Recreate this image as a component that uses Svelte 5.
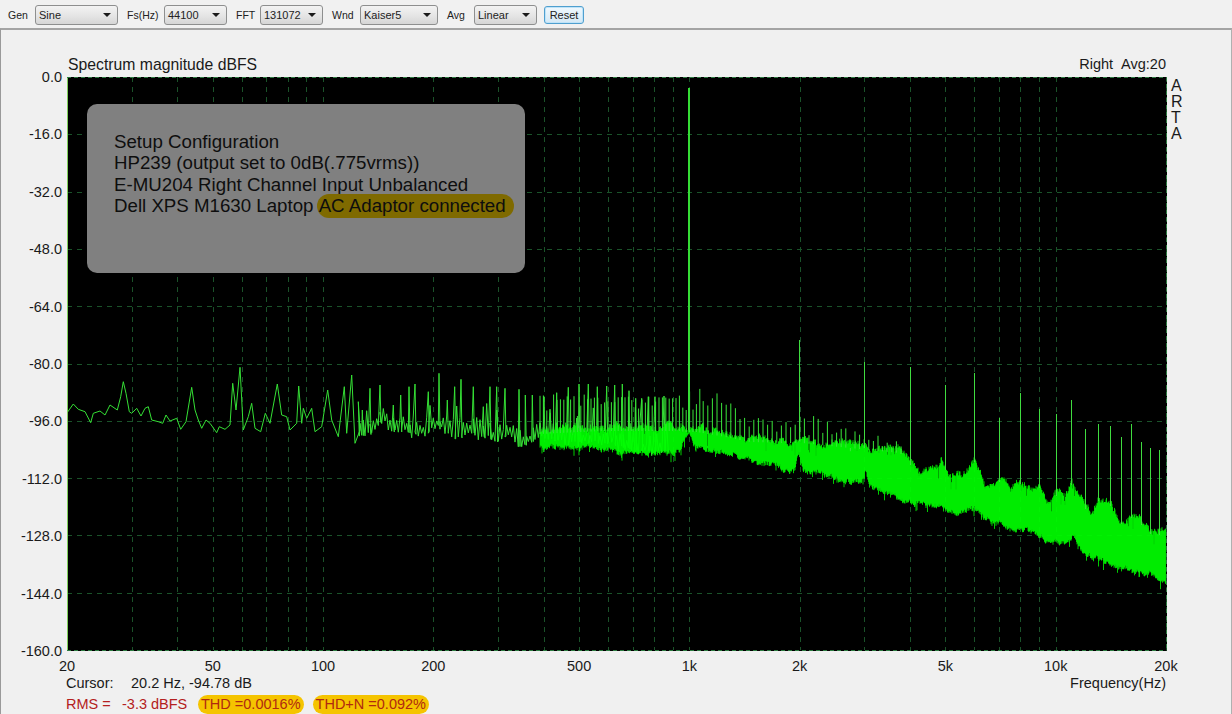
<script>
  const X0 = 67, X1 = 1166, Y0 = 77, Y1 = 650;
  const fx = (f) => X0 + (Math.log10(f / 20) / 3) * (X1 - X0);

  let seed = 20392;
  const rnd = () => {
    seed = (seed + 0x6d2b79f5) | 0;
    let t = Math.imul(seed ^ (seed >>> 15), 1 | seed);
    t = (t + Math.imul(t ^ (t >>> 7), 61 | t)) ^ t;
    return ((t ^ (t >>> 14)) >>> 0) / 4294967296;
  };
  const interp = (table, x, col) => {
    for (let i = 1; i < table.length; i++) {
      if (x <= table[i][0]) {
        const a = table[i - 1], b = table[i];
        return a[col] + ((b[col] - a[col]) * (x - a[0])) / (b[0] - a[0]);
      }
    }
    return table[table.length - 1][col];
  };

  const vLines = [];
  for (const d of [10, 100, 1000, 10000]) {
    for (let m = d === 10 ? 3 : 1; m < 10; m++) vLines.push(fx(m * d));
  }
  const hLines = [];
  for (let i = 1; i < 10; i++) hLines.push(Y0 + (i * (Y1 - Y0)) / 10);

  const yLabels = ['0.0', '-16.0', '-32.0', '-48.0', '-64.0', '-80.0', '-96.0', '-112.0', '-128.0', '-144.0', '-160.0'];
  const xLabels = [
    ['20', 20], ['50', 50], ['100', 100], ['200', 200], ['500', 500],
    ['1k', 1000], ['2k', 2000], ['5k', 5000], ['10k', 10000], ['20k', 20000]
  ].map(([t, f]) => ({ t, left: fx(f) - X0 }));

  // traced low-frequency section (zoomed coordinates: x/3+60, y/3+360)
  const traced = [[20,160],[40,132],[55,148],[75,155],[92,188],[100,160],[120,153],[135,165],[150,135],[172,150],[182,110],[190,65],[198,100],[208,155],[215,160],[230,145],[243,168],[255,145],[265,140],[275,180],[295,185],[308,190],[318,165],[330,183],[350,175],[362,208],[378,185],[395,82],[405,150],[415,180],[425,205],[438,180],[450,190],[470,218],[478,200],[495,208],[510,195],[518,70],[528,150],[540,22],[550,210],[565,170],[575,130],[585,205],[602,215],[616,160],[630,190],[652,72],[665,165],[680,170],[690,210],[710,190],[716,78],[725,190],[730,145],[740,175],[755,145],[765,215],[785,200],[803,90],[815,180],[835,230],[853,80],[860,220],[875,45],[885,250],[900,210]];
  let lowPath = 'M67 ' + (360 + 170 / 3).toFixed(1);
  for (const [zx, zy] of traced) lowPath += 'L' + (zx / 3 + 60).toFixed(1) + ' ' + (zy / 3 + 360).toFixed(1);

  // sparse section: traced spike tops, with smaller spikes between them in a band
  const spikes = [[55,125],[67,150],[90,85],[120,75],[160,135],[182,105],[207,80],[225,72],[265,95],[297,40],[322,120],[344,80],[363,58],[400,80],[430,140],[450,80],[470,80],[495,85],[537,88],[556,105],[577,105],[612,110],[650,98],[685,82],[717,72],[745,72],[772,80],[800,78],[824,75],[847,72],[867,92],[887,115],[905,115],[925,110],[945,110],[972,108]];
  const band = [[0,232],[50,236],[100,228],[125,185],[160,222],[200,222],[250,236],[280,205],[320,222],[350,246],[400,225],[470,252],[500,232],[545,270],[600,240],[700,250],[800,258],[900,280],[990,280]];
  let sparse = 'M360 430';
  let si = 0;
  let up = false;
  for (let zx = 60; zx < 990; zx += 5) {
    while (si < spikes.length && spikes[si][0] <= zx) {
      sparse += 'L' + (spikes[si][0] / 3 + 340).toFixed(1) + ' ' + (spikes[si][1] / 3 + 360).toFixed(1);
      sparse += 'L' + ((spikes[si][0] + 3) / 3 + 340).toFixed(1) + ' ' + (interp(band, zx, 1) / 3 + 360 - 2).toFixed(1);
      si++;
    }
    const low = interp(band, zx, 1);
    up = !up;
    const y = up
      ? low - 26 - rnd() * (rnd() < 0.35 ? 85 : 34)
      : low - rnd() * 16 + (rnd() < 0.12 ? 10 : 0);
    sparse += 'L' + (zx / 3 + 340).toFixed(1) + ' ' + (y / 3 + 360).toFixed(1);
  }

  // dense section: [x, top of band, bottom of band]
  const env = [[540,428,448],[600,425,450],[660,425,455],[680,425,454],[685,426,440],[689,426,431],[693,426,442],[697,426,448],[720,430,452],[750,436,462],[790,437,473],[795,437,470],[799,435,454],[803,437,468],[830,440,479],[860,443,485],[865,442,474],[869,444,487],[900,447,499],[920,470,504],[930,466,507],[942,456,509],[950,476,515],[965,470,512],[975,454,509],[985,484,519],[1000,475,525],[1010,484,529],[1020,478,532],[1030,486,534],[1040,481,539],[1047,501,542],[1055,490,544],[1065,494,545],[1072,476,535],[1085,503,555],[1092,514,560],[1098,495,559],[1110,500,565],[1125,524,570],[1132,510,570],[1150,528,575],[1165,530,584]];
  let dense = '';
  let slowTop = 0, slowLow = 0;
  for (let x = 540; x <= 1165.5; x += 0.5) {
    slowTop = slowTop * 0.9 + (rnd() - 0.5) * 3;
    slowLow = slowLow * 0.9 + (rnd() - 0.5) * 2.6;
    const dark = rnd() < 0.07 ? rnd() * 14 : 0;
    const top = interp(env, x, 1) + slowTop + rnd() * 5 + dark;
    const low = interp(env, x, 2) + slowLow - 3 + rnd() * 4 + (rnd() < 0.06 ? rnd() * 9 : 0);
    dense += 'M' + x.toFixed(1) + ' ' + low.toFixed(1) + 'V' + top.toFixed(1);
  }

  // comb lines standing above the dense band
  const combTop = [[360,392],[530,393],[600,395],[670,397],[700,388],[720,393],[735,407],[750,413],[790,418],[810,413],[840,427],[870,433],[900,442],[905,445]];
  let comb = '';
  for (let x = 540; x < 905; x += x < 700 ? 3.4 : 4.6) {
    const top = interp(combTop, x, 1) + rnd() * rnd() * 26;
    comb += 'M' + x.toFixed(1) + ' ' + (interp(env, x, 1) + 6).toFixed(1) + 'V' + top.toFixed(1);
  }

  const harmonics = [[799,340],[864,362],[910,367],[945,385],[974,373],[999,418],[1020,393],[1039,409],[1056,414],[1071,400],[1085,429],[1098,424],[1110,426],[1121,437],[1131,424],[1141,442],[1150,448],[1159,450]];
  const harm = harmonics.map(([x, y]) => 'M' + (x + 0.5) + ' ' + (interp(env, x, 1) + 6).toFixed(0) + 'V' + y).join('');

  const controls = [
    { label: 'Gen', lw: 27, value: 'Sine', width: 83 },
    { label: 'Fs(Hz)', lw: 37, value: '44100', width: 63 },
    { label: 'FFT', lw: 24, value: '131072', width: 63 },
    { label: 'Wnd', lw: 28, value: 'Kaiser5', width: 78 },
    { label: 'Avg', lw: 27, value: 'Linear', width: 63 }
  ];
</script>

<div class="app">
  <div class="toolbar">
    {#each controls as c}
      <span class="tlabel" style="width:{c.lw}px">{c.label}</span>
      <div class="select" style="width:{c.width}px"><span>{c.value}</span><i></i></div>
    {/each}
    <div class="reset">Reset</div>
  </div>

  <div class="panel">
    <div class="head">
      <span class="title">Spectrum magnitude dBFS</span>
      <span class="right">Right&nbsp;&nbsp;Avg:20</span>
    </div>

    <div class="chart">
      <div class="ylabels">
        {#each yLabels as l}<span>{l}</span>{/each}
      </div>
      <div class="plot">
        <svg width="1100" height="574" viewBox="67 77 1100 574" aria-label="Spectrum">
          <rect x="67" y="77" width="1100" height="574" fill="#000" />
          {#each vLines as x}
            <line x1={Math.round(x) + 0.5} x2={Math.round(x) + 0.5} y1="77" y2="650" class="grid" />
          {/each}
          {#each hLines as y}
            <line x1="67" x2="1166" y1={Math.round(y) + 0.5} y2={Math.round(y) + 0.5} class="grid" />
          {/each}
          <path d={lowPath} class="thin" />
          <path d={sparse} class="thin" />
          <path d={dense} class="dense" />
          <path d={comb} class="comb" />
          <path d={harm} class="harm" />
          <path d="M689 430V88" class="fund" />
          <line x1="67.5" x2="67.5" y1="77" y2="650.5" class="edge" />
          <line x1="67" x2="1166.5" y1="77.5" y2="77.5" class="frame" />
          <line x1="67" x2="1166.5" y1="650.5" y2="650.5" class="frame" />
          <line x1="1166.5" x2="1166.5" y1="77" y2="650.5" class="frame" />
        </svg>
        <div class="note">
          <div>Setup Configuration</div>
          <div>HP239 (output set to 0dB(.775vrms))</div>
          <div>E-MU204 Right Channel Input Unbalanced</div>
          <div>Dell XPS M1630 Laptop <span class="mark">AC Adaptor connected</span></div>
        </div>
      </div>
      <div class="arta"><span>A</span><span>R</span><span>T</span><span>A</span></div>
    </div>

    <div class="xlabels">
      {#each xLabels as l}
        <span style="left:{l.left}px">{l.t}</span>
      {/each}
    </div>

    <div class="cursor">
      <span class="clabel">Cursor:</span>
      <span class="cvalue">20.2 Hz, -94.78 dB</span>
      <span class="freq">Frequency(Hz)</span>
    </div>
    <div class="stats">
      <span class="rms">RMS =</span>
      <span class="rmsv">-3.3 dBFS</span>
      <span class="pill thd">THD =0.0016%</span>
      <span class="pill">THD+N =0.092%</span>
    </div>
  </div>
</div>

<style>
  :global(body) { margin: 0; background: #f0f0f0; }
  .app {
    width: 1232px; height: 714px; overflow: hidden;
    display: flex; flex-direction: column;
    font-family: "Liberation Sans", Arial, sans-serif;
    background: #f0f0f0; color: #1a1a1a;
  }
  .toolbar {
    height: 28px; box-sizing: border-box; flex: none;
    display: flex; align-items: center;
    padding: 2px 0 0 8px;
    font-size: 11px; color: #222;
    background: #f1f1f1;
  }
  .tlabel { flex: none; white-space: nowrap; font-size: 10.5px; }
  .select {
    height: 20px; box-sizing: border-box; flex: none;
    display: flex; align-items: center; justify-content: space-between;
    margin-right: 9px; padding: 0 6px 0 3px;
    border: 1px solid #8e8f8f; border-radius: 3px;
    background: linear-gradient(#f3f3f3, #e6e6e6 50%, #d6d6d6);
  }
  .select i {
    width: 0; height: 0;
    border-left: 4px solid transparent; border-right: 4px solid transparent;
    border-top: 4px solid #1a1a1a;
  }
  .reset {
    width: 40px; height: 18px; box-sizing: border-box; margin-left: -2px;
    display: flex; align-items: center; justify-content: center;
    border: 1px solid #4f9fcf; border-radius: 3px;
    background: linear-gradient(#f0f8fd, #d4e9f6);
    box-shadow: inset 0 0 0 1px #bfe3f8;
  }
  .panel {
    flex: 1; display: flex; flex-direction: column;
    border-top: 2px solid #a4a4a4; border-left: 1px solid #9a9a9a; border-right: 1px solid #b0b0b0;
    padding-top: 26px; background: #f0f0f0;
    font-size: 14.5px;
  }
  .head {
    height: 21px; flex: none;
    display: flex; justify-content: space-between; align-items: flex-start;
    margin-left: 67px; width: 1098px;
    line-height: 17px;
  }
  .title { font-size: 15.75px; }
  .chart { display: flex; height: 574px; flex: none; }
  .ylabels {
    width: 61px; flex: none; height: 590px; margin-top: -8px;
    display: flex; flex-direction: column; justify-content: space-between;
    align-items: flex-end; line-height: 16px;
  }
  .ylabels span { height: 16px; }
  .plot { position: relative; width: 1100px; height: 574px; margin-left: 5px; flex: none; }
  .plot svg { display: block; }
  .grid { stroke: #1a5229; stroke-width: 1; stroke-dasharray: 5 5; }
  .frame { stroke: #2c7a40; stroke-width: 1; stroke-dasharray: 4 3; }
  .edge { stroke: #7fcf5a; stroke-width: 1; }
  .thin { fill: none; stroke: #35e035; stroke-width: 1; stroke-linejoin: round; }
  .dense { fill: none; stroke: #00ff00; stroke-width: 0.8; }
  .comb { fill: none; stroke: #3ae53a; stroke-width: 1; }
  .harm { fill: none; stroke: #3fdc3f; stroke-width: 1; }
  .fund { fill: none; stroke: #35dc35; stroke-width: 2; }
  .note {
    position: absolute; left: 20px; top: 27px;
    width: 438px; height: 169px; box-sizing: border-box;
    padding: 27px 0 0 27px;
    background: #808080; border-radius: 10px;
    font-size: 18.7px; line-height: 21.4px; color: #0e0e0e;
    white-space: nowrap;
  }
  .mark {
    background: #7f6a00; border-radius: 12px;
    padding: 1px 8px 2px 2px; margin-left: -2px;
  }
  .arta {
    margin-left: 4px; display: flex; flex-direction: column;
    font-size: 16px; line-height: 16px; padding-top: 1px;
  }
  .xlabels { position: relative; height: 16px; flex: none; margin-left: 66px; line-height: 17px; margin-top: 7px; }
  .xlabels span { position: absolute; top: 0; transform: translateX(-50%); }
  .cursor {
    display: flex; height: 18px; flex: none; margin-left: 65px; width: 1100px; line-height: 18px;
  }
  .clabel { width: 65px; }
  .freq { margin-left: auto; }
  .stats {
    display: flex; align-items: center; height: 20px; flex: none;
    margin: 2px 0 0 65px; color: #b42020; line-height: 19px;
  }
  .rms { width: 56px; }
  .rmsv { width: 76px; }
  .pill {
    height: 19px; padding: 0 3px; border-radius: 10px;
    background: #f5c400; color: #b02a10;
  }
  .thd { margin-right: 9px; }
</style>
